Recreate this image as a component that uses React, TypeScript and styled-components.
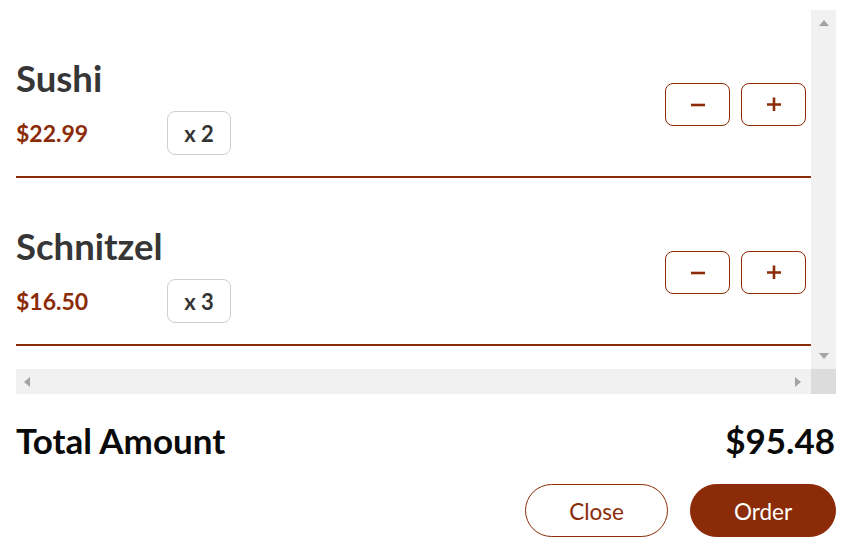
import React from "react";
import styled, { createGlobalStyle, css } from "styled-components";

const BROWN = "#8b2b07";

const Global = createGlobalStyle`
  html, body { margin: 0; padding: 0; background: #fff; }
  body { font-family: Lato, "Open Sans", sans-serif; }
`;

const Page = styled.div`
  padding: 10px 11px 0 16px;
`;

const ScrollFrame = styled.div`
  display: grid;
  grid-template-columns: 1fr 25px;
  grid-template-rows: 359px 25px;
`;

const Viewport = styled.div`
  overflow: hidden;
`;

const Track = styled.div<{ $dir: "v" | "h" }>`
  background: #f1f1f1;
  display: flex;
  align-items: center;
  justify-content: space-between;
  ${(p) =>
    p.$dir === "v"
      ? css`
          flex-direction: column;
          padding: 10px 0;
        `
      : css`
          padding: 0 10px 0 8px;
        `}
`;

const Corner = styled.div`
  background: #dcdcdc;
`;

const Arrow = styled.span<{ $to: "up" | "down" | "left" | "right" }>`
  width: 0;
  height: 0;
  border-style: solid;
  border-color: transparent;
  ${(p) =>
    p.$to === "up"
      ? css`
          border-width: 0 5.5px 6px 5.5px;
          border-bottom-color: #a3a3a3;
        `
      : p.$to === "down"
      ? css`
          border-width: 6px 5.5px 0 5.5px;
          border-top-color: #a3a3a3;
        `
      : p.$to === "left"
      ? css`
          border-width: 5.5px 6px 5.5px 0;
          border-right-color: #a3a3a3;
        `
      : css`
          border-width: 5.5px 0 5.5px 6px;
          border-left-color: #a3a3a3;
        `}
`;

const Item = styled.div`
  display: flex;
  align-items: center;
  justify-content: space-between;
  padding: 47px 5px 21px 0;
  border-bottom: 2px solid ${BROWN};
`;

const ItemInfo = styled.div`
  display: flex;
  flex-direction: column;
  gap: 11px;
`;

const ItemName = styled.h2`
  margin: 0;
  font-size: 36.5px;
  line-height: 43px;
  font-weight: 700;
  color: #363636;
`;

const PriceRow = styled.div`
  display: flex;
  align-items: center;
`;

const Price = styled.span`
  width: 151px;
  font-size: 23px;
  font-weight: 700;
  color: ${BROWN};
`;

const QtyBadge = styled.span`
  box-sizing: border-box;
  width: 64px;
  height: 44px;
  display: flex;
  align-items: center;
  justify-content: center;
  border: 1px solid #cfcfcf;
  border-radius: 8px;
  font-size: 22px;
  font-weight: 700;
  color: #333;
`;

const StepGroup = styled.div`
  display: flex;
  gap: 11px;
  margin-bottom: 4px;
`;

const StepButton = styled.button`
  box-sizing: border-box;
  width: 65px;
  height: 43px;
  display: flex;
  align-items: center;
  justify-content: center;
  padding: 0;
  background: #fff;
  border: 1px solid ${BROWN};
  border-radius: 8px;
  color: ${BROWN};
  cursor: pointer;
`;

const TotalRow = styled.div`
  display: flex;
  justify-content: space-between;
  align-items: baseline;
  margin: 25px 12px 0 16px;
  font-size: 35px;
  line-height: 42px;
  font-weight: 700;
  color: #0a0a0a;
`;

const Actions = styled.div`
  display: flex;
  justify-content: flex-end;
  gap: 22px;
  margin: 23px 11px 0 16px;
`;

const PillButton = styled.button<{ $primary?: boolean }>`
  box-sizing: border-box;
  width: ${(p) => (p.$primary ? "146px" : "143px")};
  height: 53px;
  border-radius: 27px;
  border: 1px solid ${BROWN};
  background: ${(p) => (p.$primary ? BROWN : "#fff")};
  color: ${(p) => (p.$primary ? "#fff" : BROWN)};
  font-family: Lato, "Open Sans", sans-serif;
  font-size: 22.5px;
  font-weight: 400;
  padding: 2px 0 0;
  cursor: pointer;
`;

const MinusIcon = () => (
  <svg width="14" height="14" viewBox="0 0 14 14">
    <path d="M0 8H14" stroke="currentColor" strokeWidth="2.6" />
  </svg>
);

const PlusIcon = () => (
  <svg width="14" height="14" viewBox="0 0 14 14">
    <path d="M0 7.5H14M7 0.5V14.5" stroke="currentColor" strokeWidth="2.6" />
  </svg>
);

const items = [
  { name: "Sushi", price: "$22.99", qty: 2 },
  { name: "Schnitzel", price: "$16.50", qty: 3 },
];

export default function App() {
  return (
    <>
      <Global />
      <Page>
        <ScrollFrame>
          <Viewport>
            {items.map((it) => (
              <Item key={it.name}>
                <ItemInfo>
                  <ItemName>{it.name}</ItemName>
                  <PriceRow>
                    <Price>{it.price}</Price>
                    <QtyBadge>x {it.qty}</QtyBadge>
                  </PriceRow>
                </ItemInfo>
                <StepGroup>
                  <StepButton aria-label="decrease">
                    <MinusIcon />
                  </StepButton>
                  <StepButton aria-label="increase">
                    <PlusIcon />
                  </StepButton>
                </StepGroup>
              </Item>
            ))}
          </Viewport>
          <Track $dir="v">
            <Arrow $to="up" />
            <Arrow $to="down" />
          </Track>
          <Track $dir="h">
            <Arrow $to="left" />
            <Arrow $to="right" />
          </Track>
          <Corner />
        </ScrollFrame>
      </Page>
      <TotalRow>
        <span>Total Amount</span>
        <span>$95.48</span>
      </TotalRow>
      <Actions>
        <PillButton>Close</PillButton>
        <PillButton $primary>Order</PillButton>
      </Actions>
    </>
  );
}
